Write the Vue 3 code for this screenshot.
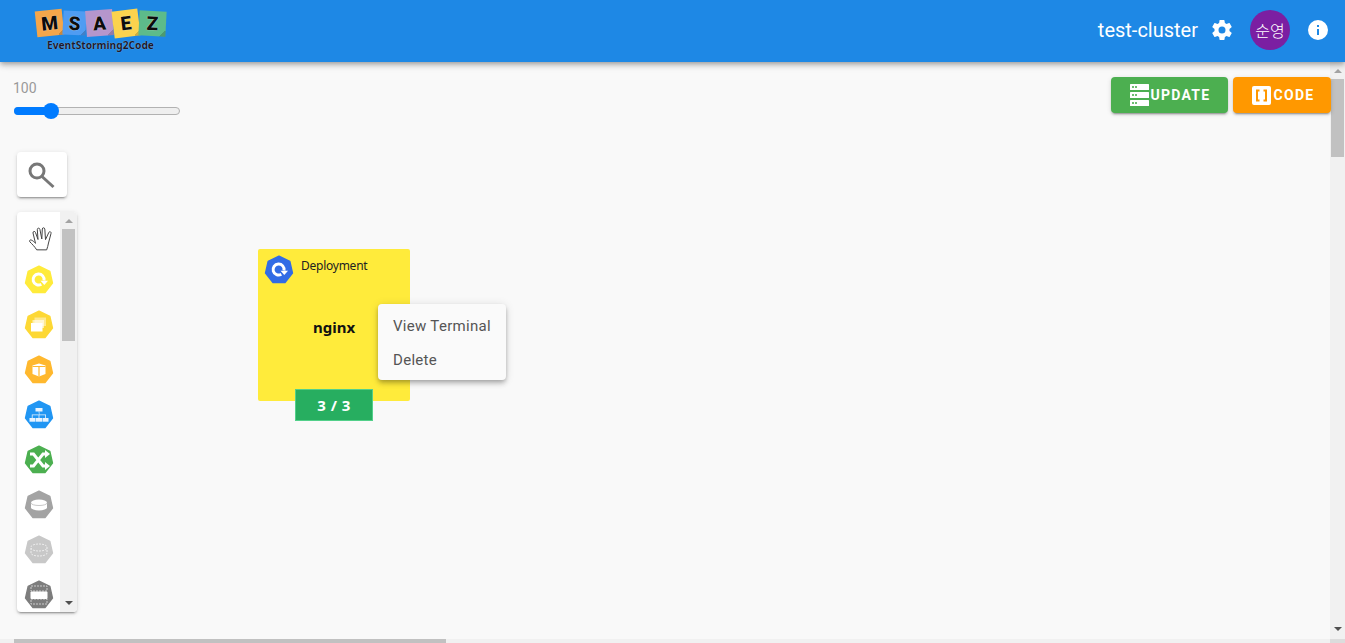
<template>
  <div class="app-root">
    <header class="top-bar">
      <div class="logo">
        <div class="logo-tiles">
          <span v-for="tile in logoTiles" :key="tile.letter" class="logo-tile" :class="tile.cls">
            <b>{{ tile.letter }}</b>
          </span>
        </div>
        <div class="logo-sub">EventStorming2Code</div>
      </div>
      <div class="top-right">
        <span class="cluster-name">test-cluster</span>
        <svg class="gear" viewBox="0 0 24 24" width="24" height="24">
          <path fill="#fff" d="M12 15.500A3.500 3.500 0 0 1 8.500 12 3.500 3.500 0 0 1 12 8.500a3.500 3.500 0 0 1 3.500 3.500 3.500 3.500 0 0 1-3.500 3.500m7.430-2.530c.04-.32.07-.64.07-.97s-.03-.66-.07-1l2.110-1.630c.19-.15.24-.42.12-.64l-2-3.460c-.12-.22-.39-.31-.61-.22l-2.490 1c-.52-.39-1.060-.73-1.690-.98l-.37-2.650A.506.506 0 0 0 14 2h-4c-.25 0-.46.18-.5.42l-.37 2.650c-.63.25-1.170.59-1.690.98l-2.490-1c-.22-.09-.49 0-.61.22l-2 3.460c-.13.22-.07.49.12.64L4.570 11c-.04.34-.07.67-.07 1s.03.65.07.97l-2.110 1.660c-.19.15-.25.42-.12.64l2 3.460c.12.22.39.3.61.22l2.490-1.010c.52.4 1.060.74 1.690.99l.37 2.650c.04.24.25.42.5.42h4c.25 0 .46-.18.5-.42l.37-2.650c.63-.26 1.170-.59 1.690-.99l2.490 1.010c.22.08.49 0 .61-.22l2-3.460c.12-.22.07-.49-.12-.64l-2.110-1.660z"/>
        </svg>
        <div class="avatar">순영</div>
        <svg class="info" viewBox="0 0 24 24" width="24" height="24">
          <path fill="#fff" d="M13 9h-2V7h2m0 10h-2v-6h2m-1-9A10 10 0 0 0 2 12a10 10 0 0 0 10 10 10 10 0 0 0 10-10A10 10 0 0 0 12 2z"/>
        </svg>
      </div>
    </header>

    <div class="workspace">
      <main class="canvas">
        <div class="zoom-box">
          <div class="zoom-value">100</div>
          <div class="zoom-track">
            <div class="zoom-fill"></div>
            <div class="zoom-thumb"></div>
          </div>
        </div>

        <div class="action-buttons">
          <button class="act-btn update">
            <svg viewBox="0 0 19 22" width="19" height="22">
              <g v-for="y in [0, 8, 16]" :key="y">
                <rect x="0" :y="y" width="19" height="6" rx="0.5" fill="#fff" />
                <rect x="2" :y="y + 2.2" width="2" height="1.6" fill="#4caf50" />
                <rect x="5" :y="y + 2.2" width="2" height="1.6" fill="#4caf50" />
              </g>
            </svg>
            <span>UPDATE</span>
          </button>
          <button class="act-btn code">
            <svg viewBox="0 0 19 19" width="19" height="19">
              <rect width="19" height="19" rx="2" fill="#fff" />
              <path d="M7.500 4.500H5v10h2.500M11.500 4.500H14v10h-2.500" fill="none" stroke="#ff9800" stroke-width="2" />
            </svg>
            <span>CODE</span>
          </button>
        </div>

        <div class="search-card">
          <svg viewBox="0 0 28 28" width="28" height="28">
            <circle cx="9" cy="10" r="7" fill="none" stroke="#777" stroke-width="3" />
            <path d="M14 15.500l11.500 10.500" stroke="#777" stroke-width="3" fill="none" />
          </svg>
        </div>

        <aside class="palette">
          <div class="palette-list">
            <svg class="hand" viewBox="0 0 24 25" width="24" height="25">
              <path fill="none" stroke="#444" stroke-width="1" stroke-linejoin="round" stroke-linecap="round" d="M7.500 23.500C6 21 3 18 1 16c-1-1-.2-2.500 1.200-2 1.500.5 3 2 4.300 3.300L4 7c-.3-1.700 2-2.300 2.500-.5L9 13.500 8.300 3.600c-.1-1.800 2.300-2 2.600-.2L12.800 13l.5-10c.1-1.700 2.400-1.600 2.500.1l.7 10.500 3.300-7.100c.6-1.500 2.700-.8 2.200 1L19.500 17c-.5 2.500-1 4.500-1.700 6.500z"/>
            </svg>
            <svg v-for="item in paletteItems" :key="item.kind" class="kube" viewBox="-15 -15 30 30" width="30" height="30">
              <polygon :points="heptagon" :fill="item.color" :stroke="item.color" stroke-width="1.5" stroke-linejoin="round" />
              <g v-if="item.kind === 'deploy'">
                <path d="M2.300 4.300A5.500 5.500 0 1 1 5 .5" fill="none" stroke="#fff" stroke-width="3" />
                <path d="M1.500 .8h7.500l-3.700 4.200z" fill="#fff" />
              </g>
              <g v-else-if="item.kind === 'replica'" fill="#fff">
                <rect x="-4.500" y="-7.500" width="11.500" height="8.500" opacity="0.45" />
                <rect x="-6.500" y="-5" width="11.500" height="8" opacity="0.6" />
                <rect x="-8" y="-2" width="11.500" height="8.500" />
              </g>
              <g v-else-if="item.kind === 'pod'">
                <path d="M0-6.500l6.500 2v8.500L0 6.500l-6.500-2.500v-8.500z" fill="#fff" />
                <path d="M-6.500-3.500h13M0-3.500V6.500" fill="none" stroke="#ffb82e" stroke-width="1.200" />
              </g>
              <g v-else-if="item.kind === 'service'" fill="#e8f3fe">
                <rect x="-3.500" y="-7" width="7" height="3.500" />
                <rect x="-9.500" y="3" width="6" height="3.700" />
                <rect x="-3" y="3" width="6" height="3.700" />
                <rect x="3.500" y="3" width="6" height="3.700" />
                <path d="M-.4-3.500h.8v3h6.600V3h-.8V.3H.4V3h-.8V.3h-6V3h-.8V-.5h7.200z" />
              </g>
              <g v-else-if="item.kind === 'ingress'">
                <path d="M-9-6h3.500L4 6h3M-9 6h3.500L4-6h3" fill="none" stroke="#fff" stroke-width="3" />
                <path d="M6-10l5 4-5 4zM6 2l5 4-5 4z" fill="#fff" />
              </g>
              <g v-else-if="item.kind === 'pv'">
                <path d="M-8-2.500a8 3 0 0 1 16 0v5a8 3 0 0 1-16 0z" fill="#fff" />
                <path d="M-8-2a8 2.500 0 0 0 16 0" fill="none" stroke="#c8c8c8" stroke-width="1" />
              </g>
              <g v-else-if="item.kind === 'pvc'" fill="none" stroke="#eee" stroke-width="1" stroke-dasharray="2 1">
                <path d="M-8-3a8 3 0 0 1 16 0v6a8 3 0 0 1-16 0z" />
                <path d="M-8-2a8 3 0 0 0 16 0" />
              </g>
              <g v-else>
                <path d="M-8-9h16v5H-8zM-8 4h16v5H-8z" fill="none" stroke="#ccc" stroke-width="1" stroke-dasharray="2 1" />
                <rect x="-8.500" y="-3.500" width="17" height="7.500" rx="1" fill="#fff" />
              </g>
            </svg>
          </div>
          <div class="palette-scroll">
            <i class="arrow-up"></i>
            <div class="palette-thumb"></div>
            <i class="arrow-down"></i>
          </div>
        </aside>

        <section class="node">
          <svg class="node-icon" viewBox="-15 -15 30 30" width="30" height="30">
            <polygon :points="heptagon" fill="#326ce5" stroke="#326ce5" stroke-width="1.5" stroke-linejoin="round" />
            <path d="M2.300 4.300A5.500 5.500 0 1 1 5 .5" fill="none" stroke="#fff" stroke-width="3" />
            <path d="M1.500 .8h7.500l-3.700 4.200z" fill="#fff" />
          </svg>
          <span class="node-type">Deployment</span>
          <strong class="node-name">nginx</strong>
          <div class="node-badge">3 / 3</div>
        </section>

        <ul class="context-menu">
          <li>View Terminal</li>
          <li>Delete</li>
        </ul>
      </main>
      <div class="v-scroll">
        <i class="arrow-up"></i>
        <div class="v-thumb"></div>
        <i class="arrow-down"></i>
      </div>
    </div>

    <div class="h-scroll">
      <div class="h-thumb"></div>
      <div class="h-corner"></div>
    </div>
  </div>
</template>

<script setup>
const logoTiles = [
  { letter: 'M', cls: 't-m' },
  { letter: 'S', cls: 't-s' },
  { letter: 'A', cls: 't-a' },
  { letter: 'E', cls: 't-e' },
  { letter: 'Z', cls: 't-z' }
]

const paletteItems = [
  { kind: 'deploy', color: '#ffeb3b' },
  { kind: 'replica', color: '#fdd835' },
  { kind: 'pod', color: '#ffb82e' },
  { kind: 'service', color: '#2196f3' },
  { kind: 'ingress', color: '#4caf50' },
  { kind: 'pv', color: '#a3a3a3' },
  { kind: 'pvc', color: '#c8c8c8' },
  { kind: 'storage', color: '#7d7d7d' }
]

// seven sided kubernetes badge
const heptagon = Array.from({ length: 7 }, (_, i) => {
  const a = -Math.PI / 2 + (i * 2 * Math.PI) / 7
  return `${(13.8 * Math.cos(a)).toFixed(2)},${(13.8 * Math.sin(a)).toFixed(2)}`
}).join(' ')
</script>

<style>
html, body {
  margin: 0;
  height: 100%;
  overflow: hidden;
}
</style>

<style scoped>
.app-root {
  width: 1345px;
  height: 643px;
  display: flex;
  flex-direction: column;
  background: #f9f9f9;
  font-family: Roboto, sans-serif;
  overflow: hidden;
}

.top-bar {
  height: 62px;
  flex: none;
  background: #1e88e5;
  box-shadow: 0 2px 4px -1px rgba(0, 0, 0, .2), 0 4px 5px 0 rgba(0, 0, 0, .14), 0 1px 10px 0 rgba(0, 0, 0, .12);
  display: flex;
  justify-content: space-between;
  align-items: center;
  position: relative;
  z-index: 2;
}

.logo {
  margin-left: 36px;
  width: 130px;
  height: 42px;
  margin-top: -3px;
}

.logo-tiles {
  display: flex;
  align-items: center;
  height: 29px;
}

.logo-tile {
  height: 26px;
  display: flex;
  align-items: center;
  justify-content: center;
  font-family: Roboto, sans-serif;
  font-size: 19px;
  line-height: 1;
  color: #0c0c0c;
  background-image: linear-gradient(135deg, transparent 88%, rgba(0, 0, 0, .18) 88%);
}

.logo-tile b {
  font-weight: 900;
  text-shadow: 0 0 1px #fff;
}

.t-m { width: 27px; background-color: #f4a64a; transform: rotate(-6deg); }
.t-s { width: 23px; background-color: #4f9cf2; transform: rotate(3deg); height: 24px; }
.t-a { width: 27px; background-color: #b596cc; transform: rotate(-4deg); }
.t-e { width: 26px; background-color: #fbd34e; transform: rotate(-7deg); height: 27px; }
.t-z { width: 27px; background-color: #5dbb8a; transform: rotate(3deg); height: 25px; }

.logo-sub {
  margin: 1px 0 0 11px;
  font-family: "Noto Sans", sans-serif;
  font-size: 10.2px;
  font-weight: 700;
  line-height: 12px;
  color: #1a1a2e;
  text-shadow: 0 0 1px rgba(255, 255, 255, .6);
  white-space: nowrap;
}

.top-right {
  display: flex;
  align-items: center;
  margin-right: 15px;
  margin-top: -2px;
}

.cluster-name {
  color: #fff;
  font-size: 20px;
  font-weight: 400;
}

.gear {
  margin-left: 12px;
}

.avatar {
  width: 40px;
  height: 40px;
  margin-left: 16px;
  border-radius: 50%;
  background: #7b1fa2;
  color: #fff;
  font-family: "Noto Sans CJK KR", sans-serif;
  font-size: 16px;
  font-weight: 300;
  display: flex;
  align-items: center;
  justify-content: center;
}

.info {
  margin-left: 16px;
}

.workspace {
  flex: 1;
  min-height: 0;
  display: flex;
}

.canvas {
  flex: 1;
  position: relative;
}

.zoom-box {
  position: absolute;
  left: 13px;
  top: 18px;
  width: 168px;
}

.zoom-value {
  color: #999;
  font-size: 14px;
  line-height: 16px;
}

.zoom-track {
  position: relative;
  margin: 11px 0 0 1px;
  height: 8px;
  width: 166px;
  box-sizing: border-box;
  border: 1px solid #b2b2b2;
  border-radius: 4px;
  background: #efefef;
}

.zoom-fill {
  position: absolute;
  left: -1px;
  top: -1px;
  height: 8px;
  width: 37px;
  background: #007bff;
  border-radius: 4px 0 0 4px;
}

.zoom-thumb {
  position: absolute;
  left: 28px;
  top: -5px;
  width: 16px;
  height: 16px;
  border-radius: 50%;
  background: #007bff;
}

.action-buttons {
  position: absolute;
  right: -1px;
  top: 15px;
  z-index: 1;
  display: flex;
  gap: 5px;
}

.act-btn {
  height: 36px;
  border: 0;
  border-radius: 4px;
  padding: 0;
  color: #fff;
  font-family: Roboto, sans-serif;
  font-size: 14px;
  font-weight: 700;
  letter-spacing: 1.25px;
  display: flex;
  align-items: center;
  justify-content: center;
  gap: 2px;
  box-shadow: 0 3px 1px -2px rgba(0, 0, 0, .2), 0 2px 2px 0 rgba(0, 0, 0, .14), 0 1px 5px 0 rgba(0, 0, 0, .12);
}

.update {
  width: 117px;
  padding-left: 1px;
  background: #4caf50;
}

.code {
  width: 98px;
  padding-left: 2px;
  gap: 3px;
  background: #ff9800;
}

.search-card {
  position: absolute;
  left: 17px;
  top: 90px;
  width: 50px;
  height: 45px;
  background: #fff;
  border-radius: 4px;
  display: flex;
  align-items: center;
  justify-content: center;
  box-shadow: 0 3px 1px -2px rgba(0, 0, 0, .2), 0 2px 2px 0 rgba(0, 0, 0, .14), 0 1px 5px 0 rgba(0, 0, 0, .12);
}

.palette {
  position: absolute;
  left: 17px;
  top: 150px;
  width: 60px;
  height: 400px;
  display: flex;
  background: #fff;
  border-radius: 4px;
  overflow: hidden;
  box-shadow: 0 3px 1px -2px rgba(0, 0, 0, .2), 0 2px 2px 0 rgba(0, 0, 0, .14), 0 1px 5px 0 rgba(0, 0, 0, .12);
}

.palette-list {
  width: 43px;
  flex: none;
  display: flex;
  flex-direction: column;
  align-items: center;
  padding-top: 14px;
  gap: 15px;
  overflow: hidden;
}

.hand {
  margin: 0 -2px -1px 2px;
  flex: none;
}

.kube {
  flex: none;
}

.palette-scroll {
  width: 17px;
  background: #f1f1f1;
  position: relative;
}

.palette-thumb {
  position: absolute;
  left: 2px;
  right: 2px;
  top: 17px;
  height: 112px;
  background: #c1c1c1;
}

.node {
  position: absolute;
  left: 258px;
  top: 187px;
  width: 152px;
  height: 152px;
  background: #ffeb3b;
  border-radius: 2px;
  font-family: "Noto Sans", sans-serif;
}

.node-icon {
  position: absolute;
  left: 6px;
  top: 6px;
}

.node-type {
  position: absolute;
  left: 43px;
  top: 8px;
  font-size: 12px;
  letter-spacing: -.25px;
  line-height: 17px;
  color: #222;
}

.node-name {
  position: absolute;
  left: 0;
  right: 0;
  top: 67px;
  text-align: center;
  font-size: 15px;
  line-height: 22px;
  color: #111;
}

.node-badge {
  position: absolute;
  left: 37px;
  top: 140px;
  width: 78px;
  height: 32px;
  box-sizing: border-box;
  border: 1px solid #52d08a;
  background: #27ae60;
  color: #fff;
  font-size: 15px;
  font-weight: 700;
  letter-spacing: .5px;
  line-height: 31px;
  text-align: center;
}

.context-menu {
  position: absolute;
  left: 378px;
  top: 242px;
  width: 128px;
  height: 76px;
  margin: 0;
  padding: 5px 0 0;
  box-sizing: border-box;
  list-style: none;
  background: #fafafa;
  border-radius: 4px;
  box-shadow: 0 2px 4px -1px rgba(0, 0, 0, .2), 0 4px 5px 0 rgba(0, 0, 0, .14), 0 1px 10px 0 rgba(0, 0, 0, .12);
}

.context-menu li {
  height: 34px;
  line-height: 34px;
  padding-left: 15px;
  font-size: 15px;
  letter-spacing: .3px;
  color: #555;
}

.v-scroll {
  width: 15px;
  flex: none;
  background: #f1f1f1;
  position: relative;
}

.v-thumb {
  position: absolute;
  left: 1px;
  right: 1px;
  top: 17px;
  height: 78px;
  background: #c1c1c1;
}

.arrow-up,
.arrow-down {
  position: absolute;
  left: 50%;
  margin-left: -4px;
  width: 0;
  height: 0;
  border-left: 4px solid transparent;
  border-right: 4px solid transparent;
}

.arrow-up {
  top: 7px;
  border-bottom: 4px solid #a3a3a3;
}

.arrow-down {
  bottom: 8px;
  border-top: 4px solid #505050;
}

.palette-scroll .arrow-down {
  bottom: 7px;
}

.h-scroll {
  height: 4px;
  flex: none;
  background: #f1f1f1;
  position: relative;
}

.h-thumb {
  position: absolute;
  left: 14px;
  top: 0;
  width: 432px;
  height: 4px;
  background: #c1c1c1;
}

.h-corner {
  position: absolute;
  right: 0;
  top: 0;
  width: 15px;
  height: 4px;
  background: #dcdcdc;
}
</style>
